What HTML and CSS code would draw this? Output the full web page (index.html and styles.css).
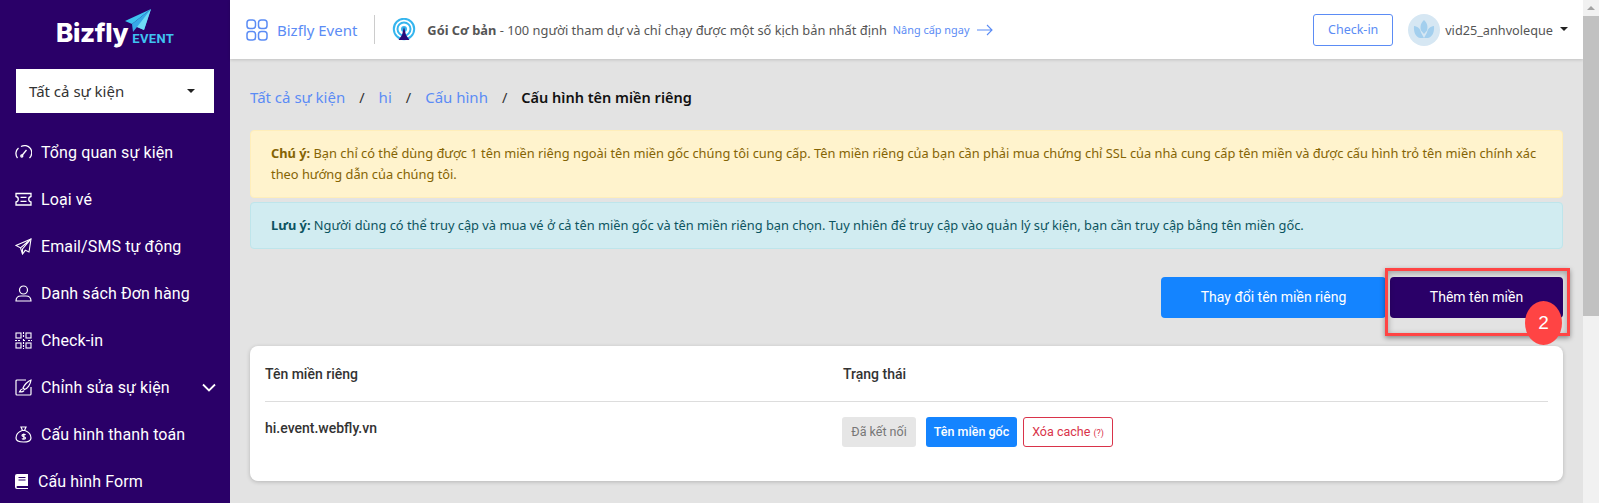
FILE: index.html
```html
<!DOCTYPE html>
<html lang="vi">
<head>
  <meta charset="UTF-8">
  <title>Cấu hình tên miền riêng</title>
  <link rel="stylesheet" href="styles.css">
</head>
<body>
<aside class="sidebar">
  <div class="logo">
    <span class="logoName">Bizfly</span>
    <span class="logoEvent">EVENT</span>
    <svg class="logoPlane" width="26" height="25" viewBox="0 0 26 25">
      <path d="M26 0L0 12l7 3z" fill="#3fc3f0"/>
      <path d="M26 0L7 15l1 8 4-5 7 3z" fill="#36a9e8"/>
      <path d="M26 0L12 18l7 3z" fill="#6fdcf5"/>
    </svg>
  </div>
  <div class="eventSelect">
    <span>Tất cả sự kiện</span>
    <i class="caret"></i>
  </div>
  <ul class="menu">
    <li>
      <svg width="17" height="17" viewBox="0 0 17 17" fill="none" stroke="#fff" stroke-width="1.3">
        <path d="M2.500 14A7.200 7.200 0 0 1 3.500 4M6 2.500A7.200 7.200 0 0 1 14.500 14"/><path d="M7 11.500L11.500 6"/><circle cx="6.800" cy="12" r="1"/>
      </svg>
      <span>Tổng quan sự kiện</span>
    </li>
    <li>
      <svg width="17" height="17" viewBox="0 0 17 17" fill="none" stroke="#fff" stroke-width="1.3">
        <path d="M1 2.500h15v3a2.800 2.800 0 0 0 0 5.500v3H1v-3a2.800 2.800 0 0 0 0-5.500z"/><path d="M5.500 6.300h6M5.500 10.300h6"/>
      </svg>
      <span>Loại vé</span>
    </li>
    <li>
      <svg width="17" height="17" viewBox="0 0 17 17" fill="none" stroke="#fff" stroke-width="1.1">
        <path d="M16 1L1 7.500l4.500 2.300L7.500 16l2.800-3.700 3.700 1.700z"/><path d="M16 1L5.500 9.800M16 1L7.500 11v5"/>
      </svg>
      <span>Email/SMS tự động</span>
    </li>
    <li>
      <svg width="17" height="17" viewBox="0 0 17 17" fill="none" stroke="#fff" stroke-width="1.2">
        <circle cx="8.500" cy="5" r="4"/><path d="M1 16c0-3 2-5 5-5h5c3 0 5 2 5 5z"/>
      </svg>
      <span>Danh sách Đơn hàng</span>
    </li>
    <li>
      <svg width="17" height="17" viewBox="0 0 17 17" fill="none" stroke="#fff" stroke-width="1.100">
        <rect x="1" y="1" width="5" height="5"/><rect x="11" y="1" width="5" height="5"/><rect x="1" y="11" width="5" height="5"/><rect x="11" y="11" width="5" height="5"/>
        <path d="M8.500 0v5M0 8.500h6M8 8.500h3M13 8.500h4M8.500 7v10" stroke-dasharray="2 1"/>
      </svg>
      <span>Check-in</span>
    </li>
    <li>
      <svg width="17" height="17" viewBox="0 0 17 17" fill="none" stroke="#fff" stroke-width="1.200">
        <path d="M11 1H2a1 1 0 0 0-1 1v13a1 1 0 0 0 1 1h13a1 1 0 0 0 1-1V8"/><path d="M16 1c-3 1-7 5-8 8l1.500 1.500c3-1 6-5 6.500-9.500zM7.500 10c-2 0-2.500 2-3 3 2 0 4 0 4.500-1.500"/>
      </svg>
      <span>Chỉnh sửa sự kiện</span>
      <svg class="chevron" width="14" height="9" viewBox="0 0 14 9" fill="none" stroke="#fff" stroke-width="1.800">
        <path d="M1 1.500l6 6 6-6"/>
      </svg>
    </li>
    <li>
      <svg width="17" height="17" viewBox="0 0 17 17" fill="none" stroke="#fff" stroke-width="1.200">
        <path d="M6 1h5l-1.500 3.500h-2zM7 4.500C3 6 1 9 1 12c0 3 3 4 7.500 4s7.500-1 7.500-4c0-3-2-6-6-7.500"/>
        <path d="M10.500 9C10 8 7 8 7 9.500s3.500 1 3.500 2.500-3 1.500-3.500.500M8.800 7.500v6"/>
      </svg>
      <span>Cấu hình thanh toán</span>
    </li>
    <li class="menuForm">
      <svg width="13" height="15" viewBox="0 0 13 15">
        <path d="M2 0h11v12H2.500a1 1 0 0 0 0 2H13v1H2a2 2 0 0 1-2-2V2a2 2 0 0 1 2-2z" fill="#fff"/>
        <path d="M3.500 3.500h7M3.500 6h7" stroke="#2a0068" stroke-width="1"/>
      </svg>
      <span>Cấu hình Form</span>
    </li>
  </ul>
</aside>

<div class="main">
  <header class="topbar">
    <svg class="appsIcon" width="22" height="22" viewBox="0 0 22 22" fill="none" stroke="#5b8cf5" stroke-width="1.500">
      <rect x="1" y="1" width="8.500" height="8.500" rx="2.800"/><rect x="12.500" y="1" width="8.500" height="8.500" rx="2.800"/>
      <rect x="1" y="12.500" width="8.500" height="8.500" rx="2.800"/><rect x="12.500" y="12.500" width="8.500" height="8.500" rx="2.800"/>
    </svg>
    <span class="appName">Bizfly Event</span>
    <span class="topDivider"></span>
    <svg class="planIcon" width="24" height="24" viewBox="0 0 24 24" fill="none">
      <circle cx="12" cy="11" r="10.200" stroke="#35b5ee" stroke-width="2"/>
      <circle cx="12" cy="11" r="6.500" stroke="#35b5ee" stroke-width="2"/>
      <circle cx="12" cy="11" r="3" fill="#35b5ee"/>
      <path d="M12 9l2 8 3.500 5h-11L10 17z" fill="#2a0a78"/>
    </svg>
    <p class="planText"><b>Gói Cơ bản</b> - 100 người tham dự và chỉ chạy được một số kịch bản nhất định</p>
    <a class="upgrade" href="javascript:;">Nâng cấp ngay</a>
    <svg class="upgradeArrow" width="16" height="12" viewBox="0 0 16 12" fill="none" stroke="#5b8cf5" stroke-width="1.100">
      <path d="M0 6h15M10 1l5 5-5 5"/>
    </svg>
    <a class="checkinBtn" href="javascript:;">Check-in</a>
    <svg class="avatar" width="32" height="32" viewBox="0 0 32 32">
      <circle cx="16" cy="16" r="16" fill="#d6e7f3"/>
      <path d="M16 6c3.500 3 4 7 3 10.500L16 20l-3-3.500C12 13 12.500 9 16 6zM6 12c4 .500 6 2.500 7 6.500l3 5.500h-4C7.500 23 5.500 18 6 12zM26 12c-4 .500-6 2.500-7 6.500L16 24h4c4.500-1 6.500-6 6-12z" fill="#a3cfee"/>
    </svg>
    <span class="userName">vid25_anhvoleque</span>
    <i class="caret userCaret"></i>
  </header>

  <div class="content">
    <nav class="crumbs">
      <a href="javascript:;">Tất cả sự kiện</a>
      <span>/</span>
      <a href="javascript:;">hi</a>
      <span>/</span>
      <a href="javascript:;">Cấu hình</a>
      <span>/</span>
      <b>Cấu hình tên miền riêng</b>
    </nav>

    <div class="alert alertWarn">
      <b>Chú ý:</b> Bạn chỉ có thể dùng được 1 tên miền riêng ngoài tên miền gốc chúng tôi cung cấp. Tên miền riêng của bạn cần phải mua chứng chỉ SSL của nhà cung cấp tên miền và được cấu hình trỏ tên miền chính xác theo hướng dẫn của chúng tôi.
    </div>
    <div class="alert alertInfo">
      <b>Lưu ý:</b> Người dùng có thể truy cập và mua vé ở cả tên miền gốc và tên miền riêng bạn chọn. Tuy nhiên để truy cập vào quản lý sự kiện, bạn cần truy cập bằng tên miền gốc.
    </div>

    <div class="actions">
      <a class="btn btnBlue" href="javascript:;">Thay đổi tên miền riêng</a>
      <div class="marked">
        <a class="btn btnPurple" href="javascript:;">Thêm tên miền</a>
        <div class="markFrame"></div>
        <div class="markNum">2</div>
      </div>
    </div>

    <div class="card">
      <div class="row rowHead">
        <div class="colName">Tên miền riêng</div>
        <div>Trạng thái</div>
      </div>
      <div class="row">
        <div class="colName domain">hi.event.webfly.vn</div>
        <div class="tags">
          <span class="tag tagGrey">Đã kết nối</span>
          <span class="tag tagBlue">Tên miền gốc</span>
          <span class="tag tagRed">Xóa cache <small>(?)</small></span>
        </div>
      </div>
    </div>
  </div>
</div>

<div class="scrollbar">
  <i class="scrollUp"></i>
  <div class="scrollThumb"></div>
</div>
</body>
</html>
```

FILE: styles.css
```css
* {
  margin: 0;
  padding: 0;
  box-sizing: border-box;
}

html, body {
  height: 100%;
  overflow: hidden;
}

body {
  display: flex;
  font-family: "Noto Sans", "Open Sans", sans-serif;
  background: #e3e3e3;
  color: #333;
}

a {
  text-decoration: none;
}

.caret {
  display: block;
  width: 0;
  height: 0;
  border-left: 4px solid transparent;
  border-right: 4px solid transparent;
  border-top: 4px solid #222;
}

/* sidebar */
.sidebar {
  width: 230px;
  flex: none;
  background: #2a0068;
  color: #fff;
  font-family: Roboto, sans-serif;
  overflow: hidden;
}

.logo {
  position: relative;
  height: 69px;
  padding: 17px 0 0 56px;
  display: flex;
  align-items: flex-start;
}

.logoName {
  font-size: 26px;
  line-height: 32px;
  font-weight: 800;
  font-family: "Inter", Roboto, sans-serif;
  letter-spacing: -.3px;
}

.logoEvent {
  margin: 15px 0 0 4px;
  font-size: 13px;
  line-height: 14px;
  font-weight: 700;
  color: #3fc3f0;
  letter-spacing: .3px;
}

.logoPlane {
  position: absolute;
  left: 125px;
  top: 9px;
}

.eventSelect {
  margin-left: 16px;
  width: 198px;
  height: 44px;
  padding: 0 19px 0 13px;
  background: #fff;
  color: #333;
  font-family: "Noto Sans", sans-serif;
  font-size: 15px;
  display: flex;
  align-items: center;
  justify-content: space-between;
}

.menu {
  list-style: none;
  margin-top: 16px;
}

.menu li {
  height: 47px;
  padding: 0 14px 0 15px;
  display: flex;
  align-items: center;
  font-size: 16px;
  letter-spacing: .1px;
}

.menu li span {
  margin-left: 9px;
}

.menu .menuForm span {
  margin-left: 10px;
}

.chevron {
  margin-left: auto;
}

/* top bar */
.main {
  flex: 1;
  min-width: 0;
  display: flex;
  flex-direction: column;
}

.topbar {
  height: 59px;
  flex: none;
  background: #fff;
  box-shadow: 0 1px 3px rgba(0, 0, 0, .15);
  display: flex;
  align-items: center;
  padding: 0 15px 0 16px;
  position: relative;
}

.appName {
  margin-left: 9px;
  font-size: 15px;
  color: #5b8cf5;
}

.topDivider {
  width: 1px;
  height: 29px;
  margin: 0 17px;
  background: #ccc;
}

.planText {
  margin-left: 11px;
  font-size: 12.850px;
  color: #555;
  white-space: nowrap;
}

.upgrade {
  margin-left: 6px;
  font-size: 10.900px;
  color: #5b8cf5;
}

.upgradeArrow {
  margin-left: 8px;
}

.checkinBtn {
  margin-left: auto;
  width: 80px;
  height: 32px;
  line-height: 30px;
  text-align: center;
  font-size: 12.500px;
  color: #5b8cf5;
  border: 1px solid #5b8cf5;
  border-radius: 3px;
}

.avatar {
  margin-left: 15px;
}

.userName {
  margin-left: 5px;
  font-size: 12.700px;
  color: #555;
}

.userCaret {
  margin: -2px 0 0 7px;
}

/* content */
.content {
  flex: 1;
  padding: 0 20px;
}

.crumbs {
  height: 71px;
  padding-top: 4px;
  display: flex;
  align-items: center;
  font-size: 14.500px;
  color: #333;
}

.crumbs a {
  font-size: 15px;
  color: #5b8cf5;
}

.crumbs span {
  margin: 0 14px;
}

.crumbs b {
  font-weight: 600;
  color: #111;
}

.alert {
  border: 1px solid;
  border-radius: 4px;
  padding: 12px 20px;
  font-size: 12.830px;
  line-height: 21px;
  margin-bottom: 4px;
}

.alert b {
  font-weight: 700;
}

.alertWarn {
  background: #fff3cd;
  border-color: #ffeeba;
  color: #856404;
}

.alertInfo {
  background: #d1ecf1;
  border-color: #bee5eb;
  color: #0c5460;
}

.actions {
  display: flex;
  justify-content: flex-end;
  gap: 4px;
  margin-top: 28px;
}

.btn {
  display: block;
  height: 41px;
  line-height: 41px;
  text-align: center;
  color: #fff;
  font-family: Roboto, sans-serif;
  font-size: 14px;
  border-radius: 4px;
}

.btnBlue {
  width: 225px;
  background: #1484ff;
}

.btnPurple {
  width: 173px;
  background: #2a0068;
}

.marked {
  position: relative;
}

.markFrame {
  position: absolute;
  left: -5px;
  top: -9px;
  right: -7px;
  bottom: -18px;
  border: 3px solid #f44;
  box-shadow: 0 2px 5px rgba(0, 0, 0, .4), inset 0 2px 6px rgba(0, 0, 0, .3);
}

.markNum {
  position: absolute;
  left: 135px;
  top: 24px;
  width: 37px;
  height: 44px;
  border-radius: 50%;
  background: #f44;
  color: #fff;
  font-family: "Liberation Sans", sans-serif;
  font-size: 19px;
  line-height: 44px;
  text-align: center;
}

.card {
  margin-top: 28px;
  height: 135px;
  padding: 0 15px;
  background: #fff;
  border-radius: 8px;
  box-shadow: 0 1px 4px rgba(0, 0, 0, .2);
  font-family: Roboto, sans-serif;
  font-size: 14px;
}

.row {
  display: flex;
}

.rowHead {
  height: 56px;
  padding-top: 1px;
  align-items: center;
  border-bottom: 1px solid #ddd;
  font-weight: 500;
  color: #333;
}

.colName {
  width: 578px;
}

.domain {
  font-weight: 500;
  padding-top: 18px;
}

.tags {
  display: flex;
  gap: 10px;
  padding-top: 15px;
  margin-left: -1px;
}

.tag {
  height: 30px;
  line-height: 30px;
  text-align: center;
  font-size: 12.500px;
  border-radius: 3px;
  white-space: nowrap;
}

.tagGrey {
  width: 74px;
  background: #e6e6e6;
  color: #777;
}

.tagBlue {
  width: 91px;
  background: #1484ff;
  color: #fff;
  font-weight: 500;
}

.tagRed {
  margin-left: -4px;
  width: 90px;
  line-height: 28px;
  border: 1px solid #d9334a;
  color: #d9334a;
}

.tagRed small {
  font-size: 9px;
}

/* scrollbar */
.scrollbar {
  width: 16px;
  flex: none;
  background: #f1f1f1;
  padding-top: 16px;
  position: relative;
}

.scrollUp {
  position: absolute;
  left: 4px;
  top: 6px;
  width: 0;
  height: 0;
  border-left: 4px solid transparent;
  border-right: 4px solid transparent;
  border-bottom: 4px solid #a3a3a3;
}

.scrollThumb {
  height: 300px;
  background: #c1c1c1;
}
```
